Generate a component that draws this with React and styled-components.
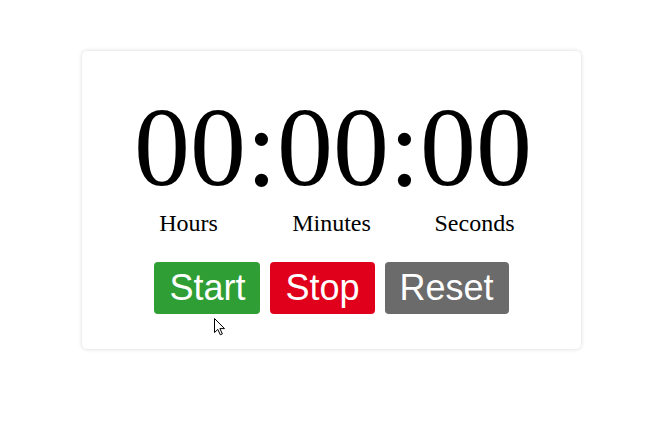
import React from "react";
import styled, { createGlobalStyle } from "styled-components";

const Global = createGlobalStyle`
  html, body { margin: 0; padding: 0; background: #ffffff; }
  body { font-family: "Liberation Serif", "Times New Roman", serif; }
`;

const Page = styled.div`
  width: 654px;
  height: 442px;
  padding: 51px 0 0 82px;
  box-sizing: border-box;
  position: relative;
`;

const Card = styled.div`
  width: 499px;
  height: 298px;
  box-sizing: border-box;
  background: #ffffff;
  border-radius: 5px;
  box-shadow: 0 0 4px rgba(0, 0, 0, 0.16);
  padding-top: 34px;
  display: flex;
  flex-direction: column;
  align-items: center;
`;

const Clock = styled.div`
  font-family: "Liberation Serif", "Times New Roman", serif;
  font-size: 112px;
  line-height: 124px;
  color: #000;
  white-space: nowrap;
  margin-left: 3px;
`;

const Labels = styled.div`
  display: grid;
  grid-template-columns: repeat(3, 143px);
  margin-top: 0;
`;

const Label = styled.div`
  font-family: "Liberation Serif", "Times New Roman", serif;
  font-size: 24px;
  line-height: 28px;
  text-align: center;
  color: #000;
`;

const Buttons = styled.div`
  display: flex;
  gap: 10px;
  margin-top: 25px;
`;

const Button = styled.button`
  font-family: "Liberation Sans", Arial, sans-serif;
  font-size: 36px;
  line-height: 42px;
  padding: 5px 15px;
  border: none;
  border-radius: 4px;
  color: #ffffff;
  background: ${(p) => p.$bg};
  cursor: pointer;
`;

const Cursor = styled.svg`
  position: absolute;
  left: 213px;
  top: 317px;
`;

export default function App() {
  return (
    <>
      <Global />
      <Page>
        <Card>
          <Clock>00:00:00</Clock>
          <Labels>
            <Label>Hours</Label>
            <Label>Minutes</Label>
            <Label>Seconds</Label>
          </Labels>
          <Buttons>
            <Button $bg="#2f9e35">Start</Button>
            <Button $bg="#e1001b">Stop</Button>
            <Button $bg="#6b6b6b">Reset</Button>
          </Buttons>
        </Card>
        <Cursor width="14" height="20" viewBox="0 0 14 20">
          <path
            d="M1.5 1.5 L1.5 15.5 L4.8 12.4 L7.3 17.8 L9.4 16.9 L6.9 11.6 L11.5 11.6 Z"
            fill="#ffffff"
            stroke="#000000"
            strokeWidth="1"
            strokeLinejoin="miter"
          />
        </Cursor>
      </Page>
    </>
  );
}
